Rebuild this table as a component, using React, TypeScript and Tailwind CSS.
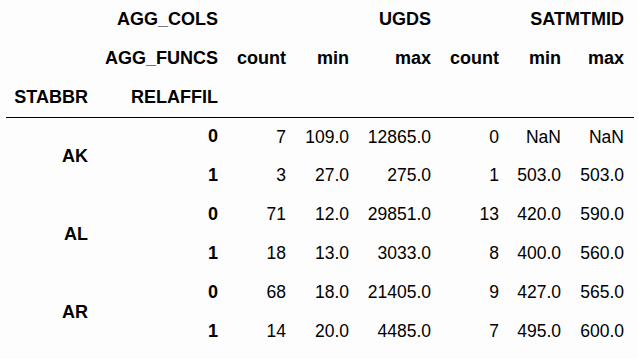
const widths = [92, 130, 68, 63, 82, 68, 62, 63];

type Row = {
  state?: string;
  aff: string;
  vals: string[];
};

const rows: Row[] = [
  { state: "AK", aff: "0", vals: ["7", "109.0", "12865.0", "0", "NaN", "NaN"] },
  { aff: "1", vals: ["3", "27.0", "275.0", "1", "503.0", "503.0"] },
  { state: "AL", aff: "0", vals: ["71", "12.0", "29851.0", "13", "420.0", "590.0"] },
  { aff: "1", vals: ["18", "13.0", "3033.0", "8", "400.0", "560.0"] },
  { state: "AR", aff: "0", vals: ["68", "18.0", "21405.0", "9", "427.0", "565.0"] },
  { aff: "1", vals: ["14", "20.0", "4485.0", "7", "495.0", "600.0"] },
];

export default function App() {
  const cell = "h-[39px] p-0 pr-[10px] text-right align-middle whitespace-nowrap";
  const th = cell + " text-[18px]";
  const td = cell + " text-[17.5px]";
  return (
    <div className="w-[638px] h-[359px] bg-[#fdfdfd] text-black font-['Liberation_Sans',Arial,sans-serif] overflow-hidden pl-[6px]">
      <table className="table-fixed border-collapse">
        <colgroup>
          {widths.map((w, i) => (
            <col key={i} style={{ width: w }} />
          ))}
        </colgroup>
        <thead>
          <tr>
            <th className={th}></th>
            <th className={th}>AGG_COLS</th>
            <th className={th} colSpan={3}>UGDS</th>
            <th className={th} colSpan={3}>SATMTMID</th>
          </tr>
          <tr>
            <th className={th}></th>
            <th className={th}>AGG_FUNCS</th>
            <th className={th}>count</th>
            <th className={th}>min</th>
            <th className={th}>max</th>
            <th className={th}>count</th>
            <th className={th}>min</th>
            <th className={th}>max</th>
          </tr>
          <tr className="border-b border-black">
            <th className={th}>STABBR</th>
            <th className={th}>RELAFFIL</th>
            {[0, 1, 2, 3, 4, 5].map((i) => (
              <th key={i} className={th}></th>
            ))}
          </tr>
        </thead>
        <tbody>
          {rows.map((r, i) => (
            <tr key={i}>
              {r.state && (
                <th className={th} rowSpan={2}>
                  {r.state}
                </th>
              )}
              <th className={th}>{r.aff}</th>
              {r.vals.map((v, j) => (
                <td key={j} className={td}>
                  {v}
                </td>
              ))}
            </tr>
          ))}
        </tbody>
      </table>
    </div>
  );
}
